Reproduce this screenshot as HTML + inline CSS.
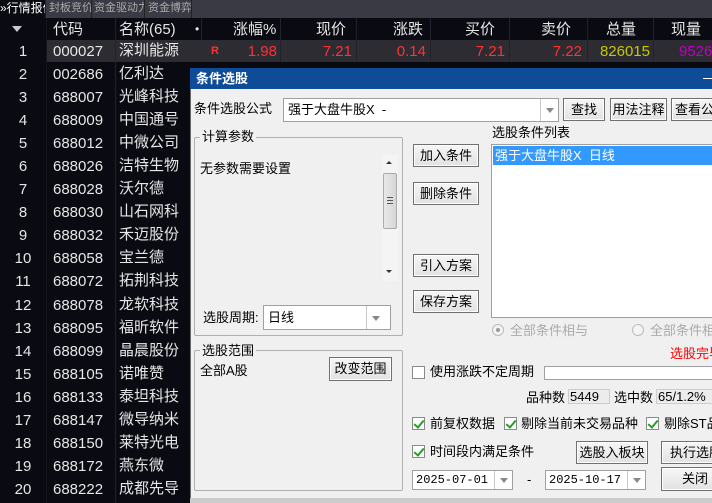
<!DOCTYPE html>
<html><head><meta charset="utf-8"><style>
*{margin:0;padding:0;box-sizing:border-box}
body{width:712px;height:503px;overflow:hidden;background:#0a0a12;font-family:"Liberation Sans","Noto Sans CJK SC",sans-serif;position:relative}
.a{position:absolute;white-space:nowrap}
.t{font-size:15px;color:#e6e6e6;line-height:23px}
.tab{position:absolute;top:0;height:18px;font-size:11px;line-height:17px;color:#aaa;background:#3a3a44;border-right:1px solid #222;padding:0 0 0 2px;white-space:nowrap;overflow:hidden}
.d{font-size:13px;color:#000;line-height:16px}
.btn{position:absolute;background:linear-gradient(#f6f6f6,#e2e2e2);border:1px solid #707070;box-shadow:inset 0 0 0 1px #fff;font-size:13px;text-align:center;color:#000;white-space:nowrap;overflow:hidden}
.box{position:absolute;background:#fff;border:1px solid #a0a0a0}
.grp{position:absolute;border:1px solid #b0b0b0;border-radius:2px}
.leg{position:absolute;background:#f0f0f0;font-size:13px;padding:0 2px;line-height:14px}
.dd{position:absolute;right:0;top:0;bottom:0;width:18px;border-left:1px solid #c8c8c8;background:#fff}
.dd:after{content:"";position:absolute;left:5px;top:50%;margin-top:-2px;border:4px solid transparent;border-top:5px solid #888;border-bottom:0}
.cb{position:absolute;width:13px;height:13px;border:1px solid #8a8a8a;background:#fff}
.cb.on:after{content:"";position:absolute;left:3px;top:0px;width:4px;height:8px;border:solid #21a121;border-width:0 2px 2px 0;transform:rotate(40deg)}
.rad{position:absolute;width:12px;height:12px;border-radius:50%;border:1px solid #bbb;background:#f4f4f4}
.sep{position:absolute;top:18px;width:1px;background:#22222a}
</style></head><body>
<div class="tab" style="left:0;width:46px;background:#0a0a12;color:#fff;padding:0;font-size:12px">»行情报价</div>
<div class="tab" style="left:46px;width:46px;padding-left:3px">封板竞价</div>
<div class="tab" style="left:92px;width:53px">资金驱动力</div>
<div class="tab" style="left:145px;width:47px;padding-left:3px">资金博弈</div>
<div class="a" style="left:192px;top:0;width:520px;height:18px;background:#3a3a44"></div>
<div class="a" style="left:0;top:18px;width:712px;height:22px;background:#0a0a12"></div>
<div class="a" style="left:12px;top:26px;border:5px solid transparent;border-top:6px solid #ccc;border-bottom:0"></div>
<div class="a t" style="left:53px;top:18px">代码</div>
<div class="a t" style="left:119px;top:18px">名称(65)</div>
<div class="a t" style="left:195px;top:18px;font-size:12px">•</div>
<div class="a t" style="left:233px;top:18px">涨幅%</div>
<div class="a t" style="left:316px;top:18px">现价</div>
<div class="a t" style="left:393px;top:18px">涨跌</div>
<div class="a t" style="left:465px;top:18px">买价</div>
<div class="a t" style="left:541px;top:18px">卖价</div>
<div class="a t" style="left:606px;top:18px">总量</div>
<div class="a t" style="left:671px;top:18px">现量</div>
<div class="a" style="left:46px;top:40px;width:666px;height:22px;background:#2c2c32"></div>
<div class="sep" style="left:115px;height:485px"></div>
<div class="sep" style="left:46px;height:485px;background:#15151c"></div>
<div class="sep" style="left:201px;height:22px"></div>
<div class="sep" style="left:280px;height:44px"></div>
<div class="sep" style="left:356px;height:44px"></div>
<div class="sep" style="left:430px;height:44px"></div>
<div class="sep" style="left:509px;height:44px"></div>
<div class="sep" style="left:587px;height:44px"></div>
<div class="sep" style="left:653px;height:44px"></div>
<div class="a" style="left:211px;top:45px;font-size:11px;color:#ff3232;font-weight:bold">R</div>
<div class="a t" style="left:232px;top:40px;width:45px;text-align:right;color:#ff3232">1.98</div>
<div class="a t" style="left:300px;top:40px;width:52px;text-align:right;color:#ff3232">7.21</div>
<div class="a t" style="left:370px;top:40px;width:56px;text-align:right;color:#ff3232">0.14</div>
<div class="a t" style="left:450px;top:40px;width:55px;text-align:right;color:#ff3232">7.21</div>
<div class="a t" style="left:530px;top:40px;width:52px;text-align:right;color:#ff3232">7.22</div>
<div class="a t" style="left:590px;top:40px;width:60px;text-align:right;color:#c8c800">826015</div>
<div class="a t" style="left:679px;top:40px;color:#c000c0">9526</div>
<div class="a t" style="left:0;top:40px;width:46px;text-align:center;line-height:23.05px">1<br>2<br>3<br>4<br>5<br>6<br>7<br>8<br>9<br>10<br>11<br>12<br>13<br>14<br>15<br>16<br>17<br>18<br>19<br>20</div>
<div class="a t" style="left:53px;top:40px;line-height:23.05px">000027<br>002686<br>688007<br>688009<br>688012<br>688026<br>688028<br>688030<br>688032<br>688058<br>688072<br>688078<br>688095<br>688099<br>688105<br>688133<br>688147<br>688150<br>688172<br>688222</div>
<div class="a t" style="left:119px;top:39px;line-height:23.05px">深圳能源<br>亿利达<br>光峰科技<br>中国通号<br>中微公司<br>洁特生物<br>沃尔德<br>山石网科<br>禾迈股份<br>宝兰德<br>拓荆科技<br>龙软科技<br>福昕软件<br>晶晨股份<br>诺唯赞<br>泰坦科技<br>微导纳米<br>莱特光电<br>燕东微<br>成都先导</div>
<div class="a" style="left:190px;top:68px;width:522px;height:435px;background:#f0f0f0;border-left:1px solid #6a6a6a"></div>
<div class="a" style="left:190px;top:68px;width:522px;height:21px;background:#0e4c98"></div>
<div class="a" style="left:196px;top:70px;color:#fff;font-size:13px;font-weight:bold;line-height:17px">条件选股</div>
<div class="a" style="left:703px;top:78px;width:9px;height:1px;background:#fff"></div>
<div class="a" style="left:190px;top:498px;width:522px;height:5px;background:#ccc"></div>
<div class="a d" style="left:194px;top:101px">条件选股公式</div>
<div class="box" style="left:283px;top:98px;width:276px;height:24px"><div class="a d" style="left:4px;top:3px">强于大盘牛股X &nbsp;-</div><div class="dd"></div></div>
<div class="btn" style="left:563px;top:98px;width:42px;height:23px;line-height:21px">查找</div>
<div class="btn" style="left:610px;top:98px;width:57px;height:23px;line-height:21px">用法注释</div>
<div class="btn" style="left:671px;top:98px;width:50px;height:23px;line-height:21px;text-align:left;padding-left:3px">查看公式</div>
<div class="grp" style="left:194px;top:137px;width:209px;height:199px"></div>
<div class="leg" style="left:200px;top:130px">计算参数</div>
<div class="a d" style="left:200px;top:161px">无参数需要设置</div>
<div class="a" style="left:382px;top:155px;width:16px;height:126px;background:#f4f4f4"></div>
<div class="a" style="left:386px;top:161px;border:3px solid transparent;border-bottom:3px solid #333;border-top:0"></div>
<div class="a" style="left:386px;top:270px;border:3px solid transparent;border-top:3px solid #333;border-bottom:0"></div>
<div class="a" style="left:383px;top:173px;width:14px;height:56px;border:1px solid #aaa;border-radius:2px;background:linear-gradient(90deg,#e8e8e8,#d6d6d6)"></div>
<div class="a" style="left:387px;top:197px;width:6px;height:7px;border-top:1px solid #555;border-bottom:1px solid #555"><div style="margin-top:2px;height:1px;background:#555"></div></div>
<div class="a d" style="left:203px;top:310px">选股周期:</div>
<div class="box" style="left:263px;top:305px;width:128px;height:25px"><div class="a d" style="left:4px;top:4px">日线</div><div class="dd" style="width:24px"></div></div>
<div class="btn" style="left:413px;top:144px;width:66px;height:23px;line-height:21px">加入条件</div>
<div class="btn" style="left:413px;top:182px;width:66px;height:23px;line-height:21px">删除条件</div>
<div class="btn" style="left:413px;top:254px;width:66px;height:23px;line-height:21px">引入方案</div>
<div class="btn" style="left:413px;top:290px;width:66px;height:23px;line-height:21px">保存方案</div>
<div class="a d" style="left:492px;top:125px">选股条件列表</div>
<div class="box" style="left:491px;top:144px;width:225px;height:174px"></div>
<div class="a" style="left:493px;top:146px;width:219px;height:19px;background:#3399ff"></div>
<div class="a d" style="left:495px;top:148px;color:#fff">强于大盘牛股X &nbsp;日线</div>
<div class="rad" style="left:492px;top:324px"></div><div class="a" style="left:496px;top:328px;width:4px;height:4px;border-radius:50%;background:#999"></div>
<div class="a d" style="left:510px;top:323px;color:#aaa">全部条件相与</div>
<div class="rad" style="left:632px;top:324px"></div>
<div class="a d" style="left:650px;top:323px;color:#aaa">全部条件相或</div>
<div class="grp" style="left:194px;top:350px;width:209px;height:141px"></div>
<div class="leg" style="left:200px;top:344px">选股范围</div>
<div class="a d" style="left:200px;top:363px">全部A股</div>
<div class="btn" style="left:329px;top:357px;width:63px;height:24px;line-height:22px">改变范围</div>
<div class="a d" style="left:670px;top:346px;color:#ff0000">选股完毕</div>
<div class="cb" style="left:412px;top:366px"></div>
<div class="a d" style="left:430px;top:364px">使用涨跌不定周期</div>
<div class="box" style="left:544px;top:366px;width:175px;height:14px"></div>
<div class="a d" style="left:526px;top:390px">品种数</div>
<div class="a" style="left:568px;top:389px;width:42px;height:15px;border:1px solid #ccc;background:#ececec"><span class="d" style="position:absolute;left:1px;top:-1px">5449</span></div>
<div class="a d" style="left:614px;top:390px">选中数</div>
<div class="a" style="left:656px;top:389px;width:60px;height:15px;border:1px solid #ccc;background:#ececec"><span class="d" style="position:absolute;left:1px;top:-1px">65/1.2%</span></div>
<div class="cb on" style="left:412px;top:417px"></div><div class="a d" style="left:430px;top:416px">前复权数据</div>
<div class="cb on" style="left:504px;top:417px"></div><div class="a d" style="left:521px;top:416px">剔除当前未交易品种</div>
<div class="cb on" style="left:646px;top:417px"></div><div class="a d" style="left:664px;top:416px">剔除ST品种</div>
<div class="cb on" style="left:412px;top:445px"></div><div class="a d" style="left:430px;top:444px">时间段内满足条件</div>
<div class="btn" style="left:576px;top:441px;width:72px;height:23px;line-height:21px">选股入板块</div>
<div class="btn" style="left:661px;top:441px;width:60px;height:23px;line-height:21px;text-align:left;padding-left:8px">执行选股</div>
<div class="box" style="left:412px;top:470px;width:101px;height:20px"><div class="a" style="left:3px;top:2px;font-size:12px;font-family:'Liberation Mono',monospace">2025-07-01</div><div class="dd" style="width:18px"></div></div>
<div class="a d" style="left:527px;top:472px">-</div>
<div class="box" style="left:545px;top:470px;width:101px;height:20px"><div class="a" style="left:3px;top:2px;font-size:12px;font-family:'Liberation Mono',monospace">2025-10-17</div><div class="dd" style="width:18px"></div></div>
<div class="btn" style="left:661px;top:467px;width:60px;height:24px;line-height:22px;text-align:left;padding-left:20px">关闭</div>
</body></html>
